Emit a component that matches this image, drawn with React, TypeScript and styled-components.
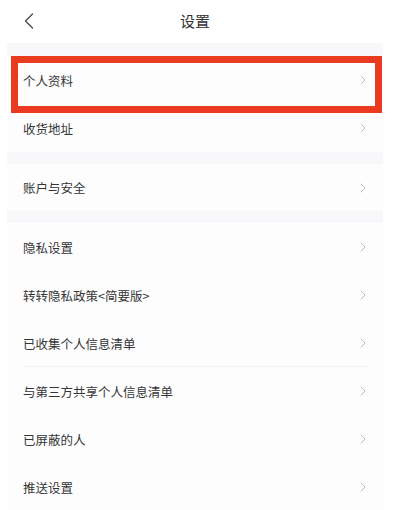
import React from "react";
import styled, { createGlobalStyle } from "styled-components";

const Global = createGlobalStyle`
  html, body { margin: 0; padding: 0; background: #ffffff; }
  body { font-family: "Noto Sans CJK SC", "Noto Sans", sans-serif; }
  * { box-sizing: border-box; }
`;

const Page = styled.div`
  width: 402px;
  height: 510px;
  overflow: hidden;
  background: #ffffff;
`;

const Column = styled.div`
  margin-left: 7px;
  width: 376px;
  display: flex;
  flex-direction: column;
`;

const Header = styled.div`
  height: 43px;
  display: grid;
  grid-template-columns: 60px 1fr 60px;
  align-items: center;
  background: #ffffff;
`;

const BackButton = styled.div`
  display: flex;
  align-items: center;
  padding-left: 17px;
  margin-top: -2px;
`;

const Title = styled.div`
  text-align: center;
  font-size: 15px;
  color: #333333;
  margin-top: -2px;
`;

const Band = styled.div<{ $h: number }>`
  height: ${(p) => p.$h}px;
  background: #f8f8fa;
`;

const Group = styled.div`
  display: flex;
  flex-direction: column;
  background: #fdfdfe;
`;

const Row = styled.div<{ $h?: number }>`
  position: relative;
  height: ${(p) => p.$h ?? 48}px;
  display: flex;
  align-items: center;
  justify-content: space-between;
  padding: 0 17px 0 16px;
`;

const Label = styled.span`
  font-size: 12.5px;
  color: #363636;
  letter-spacing: 0;
`;

const Divider = styled.div`
  position: absolute;
  left: 16px;
  right: 15px;
  bottom: 0;
  height: 1px;
  background: #f2f2f4;
`;

const Highlight = styled.div`
  position: absolute;
  left: 4px;
  right: 1px;
  top: 0;
  height: 57px;
  border: 7px solid #ea3a1f;
  pointer-events: none;
  z-index: 2;
`;

const Chevron = () => (
  <svg width="6" height="10" viewBox="0 0 6 10" fill="none">
    <path d="M1 1 L5 5 L1 9" stroke="#bcbcc0" strokeWidth="1" strokeLinecap="round" strokeLinejoin="round" />
  </svg>
);

const BackIcon = () => (
  <svg width="10" height="16" viewBox="0 0 10 16" fill="none">
    <path d="M8.5 1 L1.5 8 L8.5 15" stroke="#4a4a4a" strokeWidth="1.3" strokeLinecap="round" strokeLinejoin="round" />
  </svg>
);

type Item = { label: string; divider?: boolean; highlight?: boolean; h?: number };

const groups: Item[][] = [
  [{ label: "个人资料", highlight: true }, { label: "收货地址" }],
  [{ label: "账户与安全", h: 47 }],
  [
    { label: "隐私设置" },
    { label: "转转隐私政策<简要版>" },
    { label: "已收集个人信息清单", divider: true },
    { label: "与第三方共享个人信息清单" },
    { label: "已屏蔽的人" },
    { label: "推送设置" },
  ],
];

export default function App() {
  return (
    <Page>
      <Global />
      <Column>
        <Header>
          <BackButton>
            <BackIcon />
          </BackButton>
          <Title>设置</Title>
          <div />
        </Header>
        <Band $h={13} />
        {groups.map((g, gi) => (
          <React.Fragment key={gi}>
            {gi > 0 && <Band $h={12} />}
            <Group>
              {g.map((it) => (
                <Row key={it.label} $h={it.h}>
                  <Label>{it.label}</Label>
                  <Chevron />
                  {it.divider && <Divider />}
                  {it.highlight && <Highlight />}
                </Row>
              ))}
            </Group>
          </React.Fragment>
        ))}
      </Column>
    </Page>
  );
}
